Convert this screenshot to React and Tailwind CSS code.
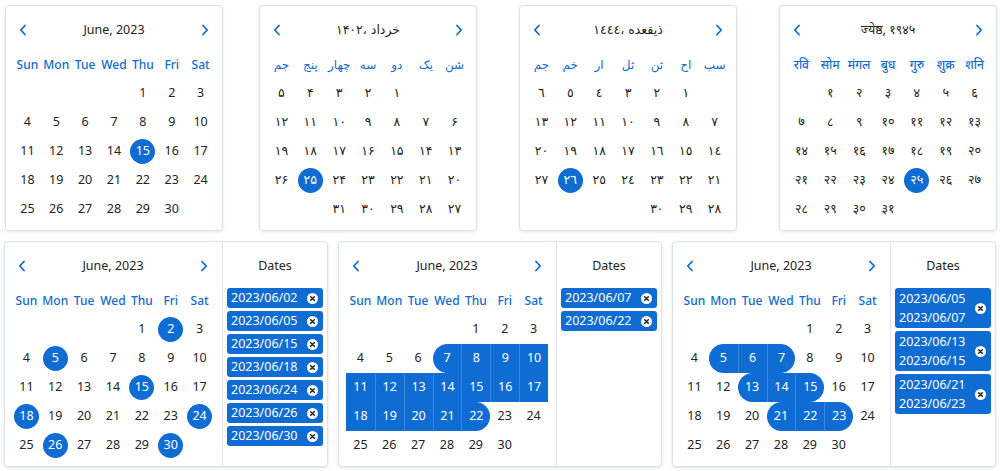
import React from "react";
import clsx from "clsx";

const FONT = {
  fontFamily:
    '"Noto Sans", "DejaVu Sans", "Noto Sans Devanagari", "Lohit Devanagari", "FreeSans", sans-serif',
};

const EN = ["Sun", "Mon", "Tue", "Wed", "Thu", "Fri", "Sat"];
const FA = ["شن", "یک", "دو", "سه", "چهار", "پنج", "جم"];
const AR = ["سب", "اح", "ثن", "ثل", "ار", "خم", "جم"];
const HI = ["रवि", "सोम", "मंगल", "बुध", "गुरु", "शुक्र", "शनि"];

// digits for each calendar
const digits = (n, set) =>
  set ? String(n).split("").map((d) => set[+d]).join("") : String(n);

// builds 35 cells, offset = empty cells before day 1
function month(offset, total, opts = {}) {
  const cells = [];
  for (let i = 0; i < offset; i++) cells.push(null);
  for (let d = 1; d <= total; d++) {
    cells.push({ day: d, label: digits(d, opts.digits), sel: (opts.sel || []).includes(d) });
  }
  while (cells.length < 35) cells.push(null);
  return cells;
}

// mark ranges on a month, each range [from, to]
function withRanges(cells, ranges) {
  return cells.map((c, i) => {
    if (!c) return c;
    const r = ranges.find(([a, b]) => c.day >= a && c.day <= b);
    if (!r) return c;
    const col = i % 7;
    const prev = cells[i - 1];
    const inRangePrev = col > 0 && prev && prev.day >= r[0] && prev.day <= r[1];
    return {
      ...c,
      range: true,
      start: c.day === r[0],
      end: c.day === r[1],
      divider: inRangePrev,
    };
  });
}

function Chevron({ right }) {
  return (
    <svg width="8" height="12" viewBox="0 0 8 12" fill="none">
      <path
        d={right ? "M2 1.5 L6.2 6 L2 10.5" : "M6 1.5 L1.8 6 L6 10.5"}
        stroke="#0f6cd3"
        strokeWidth="1.8"
        strokeLinecap="round"
        strokeLinejoin="round"
      />
    </svg>
  );
}

function Cell({ c }) {
  if (!c) return <div className="h-[29px]" />;
  if (c.sel)
    return (
      <div className="h-[29px] flex items-center justify-center">
        <span className="w-[25px] h-[25px] rounded-full bg-[#0f6cd3] text-white flex items-center justify-center">
          {c.label}
        </span>
      </div>
    );
  if (c.range)
    return (
      <div
        className={clsx(
          "h-[29px] flex items-center justify-center bg-[#0f6cd3] text-white",
          c.start && "rounded-l-full",
          c.end && "rounded-r-full",
          c.divider && "border-l border-[#3a86dc]"
        )}
      >
        {c.label}
      </div>
    );
  return <div className="h-[29px] flex items-center justify-center text-[#242424]">{c.label}</div>;
}

function Calendar({ title, days, cells, rtl, className }) {
  return (
    <div className={clsx("pt-[9px] px-[7px]", className)}>
      <div className="h-[30px] flex items-center">
        <div className="w-[18px] flex justify-center pl-[2px]">
          <Chevron />
        </div>
        <div className="flex-1 flex justify-center items-center gap-[4px] text-[12.5px] text-[#242424]">
          {title}
        </div>
        <div className="w-[18px] flex justify-center pr-[2px]">
          <Chevron right />
        </div>
      </div>
      <div dir={rtl ? "rtl" : "ltr"} className="mt-[5px] w-[202px] grid grid-cols-7 text-[12.5px]">
        {days.map((d) => (
          <div key={d} className="h-[29px] flex items-center justify-center text-[#0f6cd3] font-medium text-[12px]">
            {d}
          </div>
        ))}
        {cells.map((c, i) => (
          <Cell key={i} c={c} />
        ))}
      </div>
    </div>
  );
}

function CloseIcon() {
  return (
    <svg width="11" height="11" viewBox="0 0 11 11" className="shrink-0">
      <circle cx="5.5" cy="5.5" r="5.5" fill="#fff" />
      <path d="M3.7 3.7 L7.3 7.3 M7.3 3.7 L3.7 7.3" stroke="#1d1d1d" strokeWidth="1.5" strokeLinecap="round" />
    </svg>
  );
}

function DatesPanel({ chips, tall }) {
  return (
    <div className="flex-1 border-l border-[#e2e6ec] pt-[9px] px-[4px]">
      <div className="h-[30px] flex items-center justify-center text-[12.5px] text-[#242424]">Dates</div>
      <div className="mt-[7px] flex flex-col gap-[3px]">
        {chips.map((c, i) => (
          <div
            key={i}
            className={clsx(
              "rounded-[3px] bg-[#0f6cd3] text-white text-[12.5px] flex items-center justify-between pl-[4px] pr-[5px]",
              tall ? "h-[40px] leading-[19px]" : "h-[20px]"
            )}
          >
            <div>
              {c.map((line) => (
                <div key={line}>{line}</div>
              ))}
            </div>
            <CloseIcon />
          </div>
        ))}
      </div>
    </div>
  );
}

const card = "h-[226px] bg-white border border-[#dde2ea] rounded-[4px] shadow-[0_1px_3px_rgba(0,0,0,0.10)]";

export default function App() {
  const june = month(4, 30, { sel: [15] });
  const fa = month(2, 31, { digits: "۰۱۲۳۴۵۶۷۸۹", sel: [25] });
  const ar = month(1, 30, { digits: "٠١٢٣٤٥٦٧٨٩", sel: [26] });
  const hi = month(1, 31, { digits: "०१२३४५६७८९", sel: [25] });

  const multi = month(4, 30, { sel: [2, 5, 15, 18, 24, 26, 30] });
  const range = withRanges(month(4, 30), [[7, 22]]);
  const ranges = withRanges(month(4, 30), [
    [5, 7],
    [13, 15],
    [21, 23],
  ]);

  const juneTitle = <span>June, 2023</span>;

  return (
    <div className="w-[1000px] h-[471px] bg-white pt-[5px] overflow-hidden" style={FONT}>
      <div className="flex">
        <div className={clsx(card, "w-[218px] ml-[5px]")}>
          <Calendar title={juneTitle} days={EN} cells={june} />
        </div>
        <div className={clsx(card, "w-[218px] ml-[36px]")}>
          <Calendar
            title={
              <>
                <span>۱۴۰۲،</span>
                <span>خرداد</span>
              </>
            }
            days={FA}
            cells={fa}
            rtl
          />
        </div>
        <div className={clsx(card, "w-[218px] ml-[42px]")}>
          <Calendar
            title={
              <>
                <span>١٤٤٤،</span>
                <span>ذیقعده</span>
              </>
            }
            days={AR}
            cells={ar}
            rtl
          />
        </div>
        <div className={clsx(card, "w-[218px] ml-[42px]")}>
          <Calendar title={<span>ज्येष्ठ, १९४५</span>} days={HI} cells={hi} />
        </div>
      </div>

      <div className="flex mt-[10px]">
        <div className={clsx(card, "w-[324px] ml-[4px] flex")}>
          <Calendar title={juneTitle} days={EN} cells={multi} className="w-[217px] pr-[8px]" />
          <DatesPanel
            chips={[
              ["2023/06/02"],
              ["2023/06/05"],
              ["2023/06/15"],
              ["2023/06/18"],
              ["2023/06/24"],
              ["2023/06/26"],
              ["2023/06/30"],
            ]}
          />
        </div>
        <div className={clsx(card, "w-[324px] ml-[10px] flex")}>
          <Calendar title={juneTitle} days={EN} cells={range} className="w-[217px] pr-[8px]" />
          <DatesPanel chips={[["2023/06/07"], ["2023/06/22"]]} />
        </div>
        <div className={clsx(card, "w-[324px] ml-[10px] flex")}>
          <Calendar title={juneTitle} days={EN} cells={ranges} className="w-[217px] pr-[8px]" />
          <DatesPanel
            tall
            chips={[
              ["2023/06/05", "2023/06/07"],
              ["2023/06/13", "2023/06/15"],
              ["2023/06/21", "2023/06/23"],
            ]}
          />
        </div>
      </div>
    </div>
  );
}
